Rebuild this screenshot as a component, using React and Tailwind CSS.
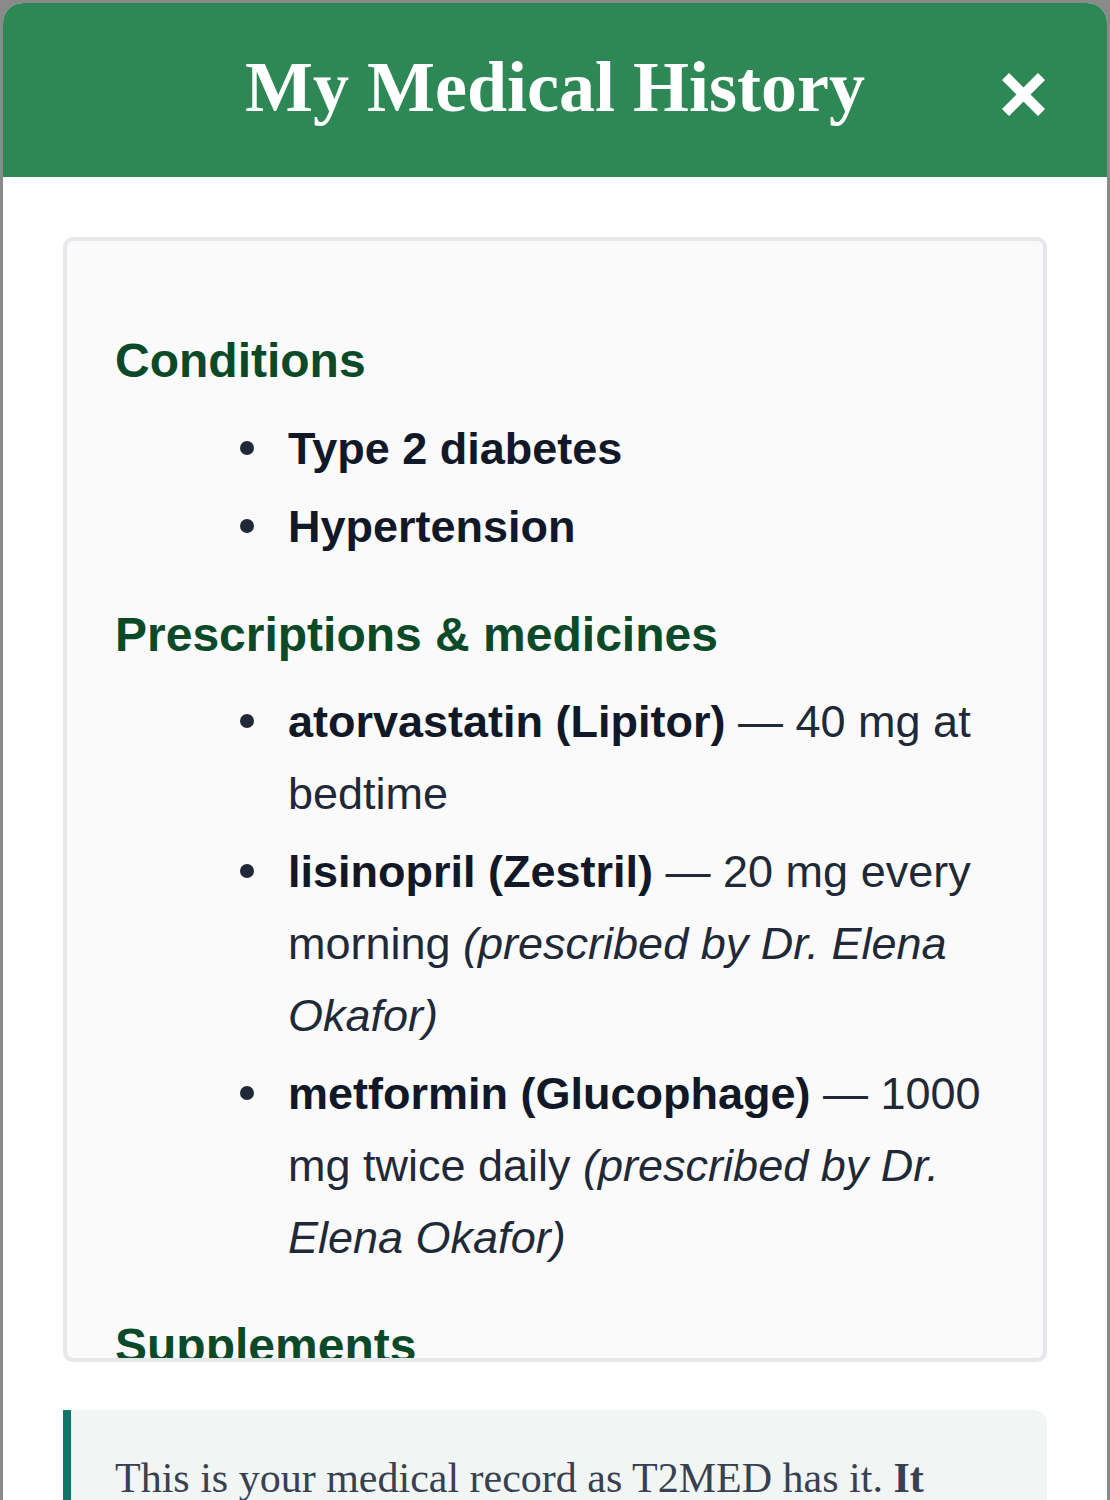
import React from 'react';

const conditions = ['Type 2 diabetes', 'Hypertension'];

const prescriptions = [
    { name: 'atorvastatin (Lipitor)', dose: '40 mg at bedtime' },
    { name: 'lisinopril (Zestril)', dose: '20 mg every morning', by: 'Dr. Elena Okafor' },
    { name: 'metformin (Glucophage)', dose: '1000 mg twice daily', by: 'Dr. Elena Okafor' },
];

const supplements = [
    { name: 'Vitamin D3', dose: '2000 IU daily' },
    { name: 'Fish oil', dose: '1000 mg daily' },
];

const bullet = "relative before:content-[''] before:absolute before:left-[-48px] before:top-[28px] before:h-[14px] before:w-[14px] before:rounded-full before:bg-[#1f2937]";

const Section = ({ title, first, children }) => (
    <section>
        <h3 className={`${first ? '' : 'mt-[43px]'} mb-[23px] text-[48px] leading-[1.2] font-bold text-[#0b4a29]`}>
            {title}
        </h3>
        <ul className="list-none pl-[173px] space-y-[6px]">
            {children}
        </ul>
    </section>
);

const DrugItem = ({ item }) => (
    <li className={`${bullet} text-[45px] leading-[72px] text-[#1f2937]`}>
        <strong className="font-bold text-[#111827]">{item.name}</strong> — {item.dose}
        {item.by && <em> (prescribed by {item.by})</em>}
    </li>
);

export default function App() {
    return (
        <div className="min-h-screen bg-[#8a8a8a] px-[3px] pt-[3px]" style={{ fontFamily: '"Liberation Sans", Arial, sans-serif' }}>
            <div className="h-[1497px] overflow-hidden rounded-t-[20px] bg-white">
                {/* Header */}
                <div className="relative flex h-[174px] items-center justify-center bg-[#2e8856]">
                    <h2 className="-mt-[6px] text-[72px] leading-none font-bold text-white" style={{ fontFamily: '"Liberation Serif", "Times New Roman", serif' }}>
                        My Medical History
                    </h2>
                    <button className="absolute right-[62px] top-[70px] text-white" aria-label="Close">
                        <svg width="43" height="43" viewBox="0 0 43 43" fill="none" className="block">
                            <path d="M3.5 3.5 L39.5 39.5 M39.5 3.5 L3.5 39.5" stroke="currentColor" strokeWidth="10" strokeLinecap="butt" />
                        </svg>
                    </button>
                </div>

                {/* Body */}
                <div className="px-[60px] pt-[60px]">
                    <div className="h-[1125px] overflow-hidden rounded-[10px] border-[4px] border-[#e5e7eb] bg-[#fafafa] px-[48px] pt-[91px]">
                        <Section title="Conditions" first>
                            {conditions.map((c) => (
                                <li key={c} className={`${bullet} text-[45px] leading-[72px] font-bold text-[#111827]`}>{c}</li>
                            ))}
                        </Section>
                        <Section title="Prescriptions & medicines">
                            {prescriptions.map((p) => <DrugItem key={p.name} item={p} />)}
                        </Section>
                        <Section title="Supplements">
                            {supplements.map((s) => <DrugItem key={s.name} item={s} />)}
                        </Section>
                    </div>

                    {/* Note */}
                    <div className="mt-[48px] rounded-r-[14px] border-l-[8px] border-[#0f7566] bg-[#f1f6f4] pl-[44px] pr-[44px] pt-[36px] pb-[34px]">
                        <p className="text-[42px] leading-[64px] text-[#374151]" style={{ fontFamily: '"Liberation Serif", "Times New Roman", serif' }}>
                            This is your medical record as T2MED has it. <strong className="font-bold">It reflects only what your care team has recorded.</strong>
                        </p>
                    </div>
                </div>
            </div>
        </div>
    );
}
